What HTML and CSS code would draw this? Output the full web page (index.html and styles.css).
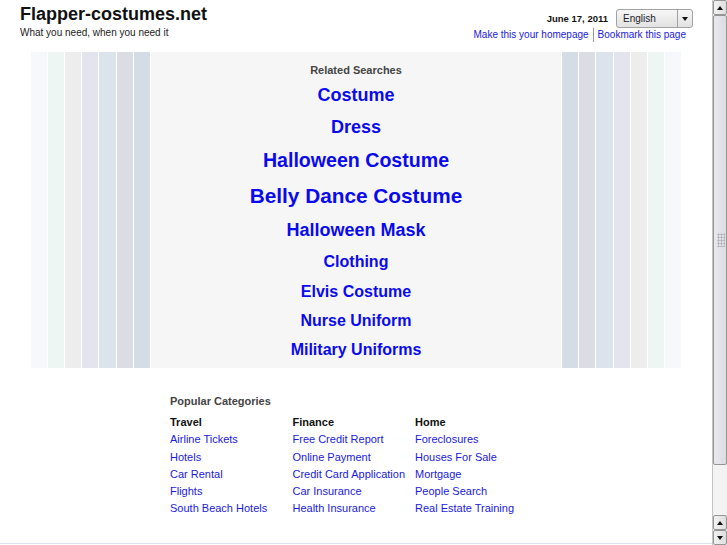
FILE: index.html
```html
<!DOCTYPE html>
<html lang="en">
<head>
  <meta charset="UTF-8">
  <title>Flapper-costumes.net</title>
  <link rel="stylesheet" href="styles.css">
</head>
<body>
  <div class="page">
    <div class="header">
      <div class="brand">
        <div class="site-name">Flapper-costumes.net</div>
        <div class="tagline">What you need, when you need it</div>
      </div>
      <div class="tools">
        <div class="date-row">
          <span class="date">June 17, 2011</span>
          <span class="lang">English<span class="lang-arrow"></span></span>
        </div>
        <div class="quick-links">
          <a href="#">Make this your homepage</a>
          <a href="#" class="sep">Bookmark this page</a>
        </div>
      </div>
    </div>

    <div class="results">
      <div class="stripe s1"></div><div class="stripe s2"></div><div class="stripe s3"></div><div class="stripe s4"></div><div class="stripe s5"></div><div class="stripe s6"></div><div class="stripe s7"></div>
      <div class="related">
        <div class="related-title">Related Searches</div>
        <a href="#" class="kw kw-18">Costume</a>
        <a href="#" class="kw kw-18">Dress</a>
        <a href="#" class="kw kw-20">Halloween Costume</a>
        <a href="#" class="kw kw-21">Belly Dance Costume</a>
        <a href="#" class="kw kw-18b">Halloween Mask</a>
        <a href="#" class="kw kw-16a">Clothing</a>
        <a href="#" class="kw kw-16">Elvis Costume</a>
        <a href="#" class="kw kw-16">Nurse Uniform</a>
        <a href="#" class="kw kw-16">Military Uniforms</a>
      </div>
      <div class="stripe s7"></div><div class="stripe s6"></div><div class="stripe s5"></div><div class="stripe s4"></div><div class="stripe s3"></div><div class="stripe s2"></div><div class="stripe s1"></div>
    </div>

    <div class="categories">
      <div class="cat-title">Popular Categories</div>
      <div class="cat-grid">
        <ul>
          <li class="cat-head">Travel</li>
          <li><a href="#">Airline Tickets</a></li>
          <li><a href="#">Hotels</a></li>
          <li><a href="#">Car Rental</a></li>
          <li><a href="#">Flights</a></li>
          <li><a href="#">South Beach Hotels</a></li>
        </ul>
        <ul>
          <li class="cat-head">Finance</li>
          <li><a href="#">Free Credit Report</a></li>
          <li><a href="#">Online Payment</a></li>
          <li><a href="#">Credit Card Application</a></li>
          <li><a href="#">Car Insurance</a></li>
          <li><a href="#">Health Insurance</a></li>
        </ul>
        <ul>
          <li class="cat-head">Home</li>
          <li><a href="#">Foreclosures</a></li>
          <li><a href="#">Houses For Sale</a></li>
          <li><a href="#">Mortgage</a></li>
          <li><a href="#">People Search</a></li>
          <li><a href="#">Real Estate Training</a></li>
        </ul>
      </div>
    </div>

    <div class="footer"></div>
  </div>

  <div class="scrollbar">
    <div class="sb-btn sb-up"></div>
    <div class="sb-thumb"><span class="sb-grip"></span></div>
    <div class="sb-track"></div>
    <div class="sb-btn sb-up"></div>
    <div class="sb-btn sb-down"></div>
  </div>
</body>
</html>
```

FILE: styles.css
```css
html, body { overflow:hidden; }
body { margin:0; padding:0; background:#fff; color:#000;
       font-family:"Liberation Sans", Arial, sans-serif; }
a { text-decoration:none; }
.page { width:712px; }

/* header */
.header { display:flex; justify-content:space-between; padding:4px 19px 0 20px; }
.site-name { font-size:18px; line-height:21px; font-weight:bold; color:#111; }
.tagline { font-size:10px; line-height:12px; margin-top:2px; color:#222; }
.tools { display:flex; flex-direction:column; align-items:flex-end; }
.date-row { display:flex; align-items:center; gap:8px; margin-top:5px; height:19px; }
.date { font-size:9.5px; font-weight:bold; color:#111; }
.lang { position:relative; display:block; width:75px; height:17px;
        border:1px solid #a2a2a2; border-radius:3px; font-size:10px; line-height:17px;
        text-indent:6px; color:#222;
        background:linear-gradient(#f6f6f6, #e2e2e2); }
.lang-arrow { position:absolute; top:0; right:0; width:14px; height:17px;
              border-left:1px solid #a2a2a2; }
.lang-arrow::after { content:""; position:absolute; left:4px; top:7px;
                     border-left:3.5px solid transparent; border-right:3.5px solid transparent;
                     border-top:4px solid #111; }
.quick-links { display:flex; margin-right:7px; line-height:14px; font-size:10px; }
.quick-links a { color:#1a1ae0; }
.quick-links .sep { border-left:1px solid #9a9a9a; margin-left:4px; padding-left:4px; }

/* related searches */
.results { width:651px; margin:10px auto 0; display:grid; column-gap:1px;
           grid-template-columns:repeat(7, 1fr) 410px repeat(7, 1fr); }
.s1 { background:#f7f8fc; }
.s2 { background:#eef6f4; }
.s3 { background:#ededed; }
.s4 { background:#e4e4ee; }
.s5 { background:#dbe3ec; }
.s6 { background:#dcdce4; }
.s7 { background:#d4dde6; }
.related { background:#f6f6f6; text-align:center; padding:11px 0 4px; }
.related-title { font-size:11px; line-height:14px; font-weight:bold; color:#444; margin-bottom:2px; }
.kw { display:block; font-weight:bold; color:#0a0aee; }
.kw-18 { font-size:18px; line-height:32px; }
.kw-20 { font-size:19.6px; line-height:35px; }
.kw-21 { font-size:20.8px; line-height:35px; }
.kw-18b { font-size:18px; line-height:34px; }
.kw-16a { font-size:16px; line-height:30px; }
.kw-16 { font-size:16px; line-height:29px; }

/* popular categories */
.categories { width:372px; margin:25px auto 0; font-size:11px; }
.cat-title { font-weight:bold; color:#444; line-height:17px; margin-bottom:4px; }
.cat-grid { display:grid; grid-template-columns:repeat(3, 122.5px); }
.cat-grid ul { list-style:none; margin:0; padding:0; }
.cat-grid li { line-height:17.25px; }
.cat-grid a { color:#1a1add; }
.cat-head { font-weight:bold; color:#111; }

.footer { margin-top:25px; height:66px; border-top:1px solid #dae2ec; }

/* window scrollbar */
.scrollbar { position:fixed; top:0; right:0; width:15px; height:100%;
             display:flex; flex-direction:column; box-sizing:border-box;
             background:#f3f3f3; border-left:1px solid #c4c4c4; }
.sb-btn { position:relative; height:15px; flex:none; box-sizing:border-box;
          border:1px solid #959595; border-radius:2px;
          background:linear-gradient(to right, #f2f2f2, #dedede); }
.sb-btn::after { content:""; position:absolute; left:3px; top:5px;
                 border-left:3.5px solid transparent; border-right:3.5px solid transparent; }
.sb-up::after { border-bottom:4px solid #111; }
.sb-down::after { border-top:4px solid #111; }
.sb-thumb { position:relative; height:450px; flex:none; box-sizing:border-box;
            border:1px solid #959595; border-radius:2px;
            background:linear-gradient(to right, #e8e8ee, #dcdce4); }
.sb-grip { position:absolute; left:3px; top:217px; width:8px; height:14px;
           background:radial-gradient(circle, #aeaeb6 0.9px, transparent 1.2px) 0 0 / 3px 3px; }
.sb-track { flex:1; }
```
